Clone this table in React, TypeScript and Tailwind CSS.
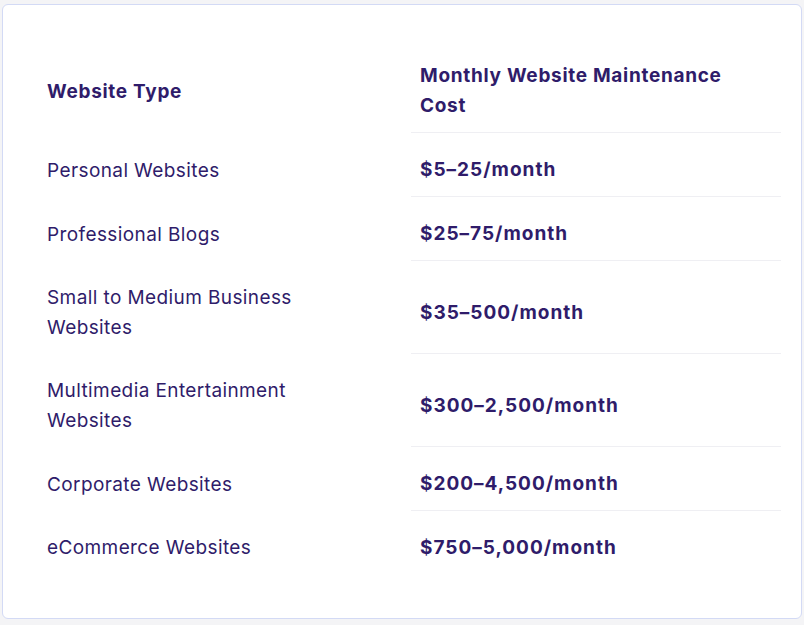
import React from "react";

const rows: { type: string[]; cost: string }[] = [
  { type: ["Personal Websites"], cost: "$5–25/month" },
  { type: ["Professional Blogs"], cost: "$25–75/month" },
  { type: ["Small to Medium Business", "Websites"], cost: "$35–500/month" },
  { type: ["Multimedia Entertainment", "Websites"], cost: "$300–2,500/month" },
  { type: ["Corporate Websites"], cost: "$200–4,500/month" },
  { type: ["eCommerce Websites"], cost: "$750–5,000/month" },
];

export default function App() {
  return (
    <div
      className="w-[804px] h-[625px] bg-[#f4f4f6] pt-[4px] pl-[2px] text-[#2f1c6a]"
      style={{ fontFamily: "Inter, 'Noto Sans', sans-serif" }}
    >
      <div className="w-[800px] h-[615px] bg-white border border-[#d3daf5] rounded-[6px] pt-[34px] pl-[35px]">
        <div className="grid grid-cols-[373px_370px] text-[19px] leading-[30px]">
          <div className="pl-[9px] pt-[22px] pb-[11px] flex items-center font-bold tracking-[0.7px]">
            Website Type
          </div>
          <div className="pl-[9px] pt-[22px] pb-[11px] flex flex-col justify-center font-bold tracking-[0.7px] border-b border-[#efeff3]">
            <span>Monthly Website Maintenance</span>
            <span>Cost</span>
          </div>
          {rows.map((r, i) => (
            <React.Fragment key={r.cost}>
              <div className="pl-[9px] pt-[22px] pb-[11px] flex flex-col justify-center tracking-[0.4px]">
                {r.type.map((t) => (
                  <span key={t}>{t}</span>
                ))}
              </div>
              <div
                className={
                  i < rows.length - 1
                    ? "pl-[9px] pt-[22px] pb-[11px] flex items-center font-bold tracking-[1px] border-b border-[#efeff3]"
                    : "pl-[9px] pt-[22px] pb-[11px] flex items-center font-bold tracking-[1px]"
                }
              >
                {r.cost}
              </div>
            </React.Fragment>
          ))}
        </div>
      </div>
    </div>
  );
}
